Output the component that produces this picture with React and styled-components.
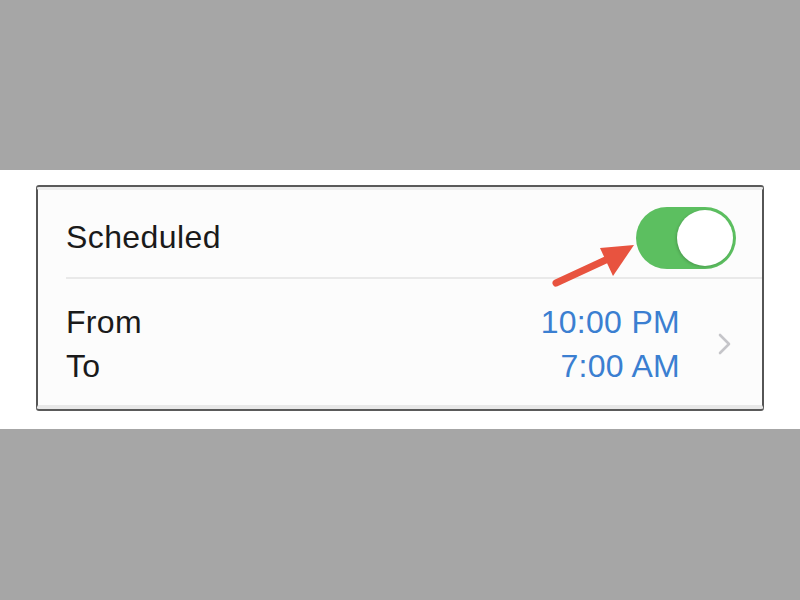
import React from "react";
import styled, { createGlobalStyle } from "styled-components";

const GlobalStyle = createGlobalStyle`
  html, body {
    margin: 0;
    padding: 0;
    background: #a6a6a6;
    font-family: "Liberation Sans", Arial, sans-serif;
  }
`;

const Page = styled.div`
  width: 800px;
  height: 600px;
  display: flex;
  flex-direction: column;
`;

const Band = styled.div`
  margin-top: 170px;
  height: 259px;
  background: #ffffff;
  padding: 17px 36px 0 36px;
  box-sizing: border-box;
`;

const Card = styled.div`
  position: relative;
  height: 222px;
  background: #fcfcfc;
  border: 2px solid #555;
  border-top: 3px solid #ececec;
  border-bottom: 4px solid #e8e8e8;
  border-radius: 3px;
  box-sizing: border-box;
  display: flex;
  flex-direction: column;
  box-shadow: 0 -2px 0 #5a5a5a, 0 2px 0 #5a5a5a;
`;

const Row = styled.div`
  display: flex;
  align-items: center;
  margin-left: 28px;
  padding-right: 26px;
  padding-top: ${(p) => p.offset || 0}px;
  box-sizing: border-box;
  height: ${(p) => p.h}px;
  border-bottom: ${(p) => (p.divided ? "2px solid #e9e9e9" : "none")};
`;

const Label = styled.div`
  flex: 1;
  font-size: 32px;
  color: #1a1a1a;
  letter-spacing: 0.4px;
`;

const Stack = styled.div`
  display: flex;
  flex-direction: column;
  gap: 12px;
  align-items: ${(p) => (p.end ? "flex-end" : "flex-start")};
  flex: ${(p) => (p.end ? "none" : 1)};
`;

const Time = styled.span`
  font-size: 32px;
  line-height: 32px;
  color: #3b7fd1;
  letter-spacing: 0.3px;
`;

const Text = styled.span`
  font-size: 32px;
  line-height: 32px;
  color: #1a1a1a;
  letter-spacing: 0.3px;
`;

const Switch = styled.div`
  position: relative;
  width: 100px;
  height: 62px;
  border-radius: 31px;
  background: #5cbf60;
`;

const Knob = styled.div`
  position: absolute;
  right: 3px;
  top: 3px;
  width: 56px;
  height: 56px;
  border-radius: 50%;
  background: #fff;
  box-shadow: -1px 1px 3px rgba(0, 0, 0, 0.18);
`;

const Chevron = styled.svg`
  margin-left: 38px;
  margin-right: 4px;
`;

const Pointer = styled.svg`
  position: absolute;
  left: 512px;
  top: 50px;
`;

export default function App() {
  return (
    <Page>
      <GlobalStyle />
      <Band>
        <Card>
          <Row h={89} offset={8} divided>
            <Label>Scheduled</Label>
            <Switch>
              <Knob />
            </Switch>
          </Row>
          <Row h={124} offset={6}>
            <Stack>
              <Text>From</Text>
              <Text>To</Text>
            </Stack>
            <Stack end>
              <Time>10:00 PM</Time>
              <Time>7:00 AM</Time>
            </Stack>
            <Chevron width="14" height="22" viewBox="0 0 14 22">
              <path
                d="M2 2 L11 11 L2 20"
                fill="none"
                stroke="#c5c5c9"
                strokeWidth="2.6"
                strokeLinecap="round"
                strokeLinejoin="round"
              />
            </Chevron>
          </Row>
          <Pointer width="90" height="50" viewBox="0 0 90 50">
            <path
              d="M6 43 L60 18"
              stroke="#e8533f"
              strokeWidth="7"
              strokeLinecap="round"
            />
            <path d="M84 5 L50 8 L63 36 Z" fill="#e8533f" />
          </Pointer>
        </Card>
      </Band>
    </Page>
  );
}
